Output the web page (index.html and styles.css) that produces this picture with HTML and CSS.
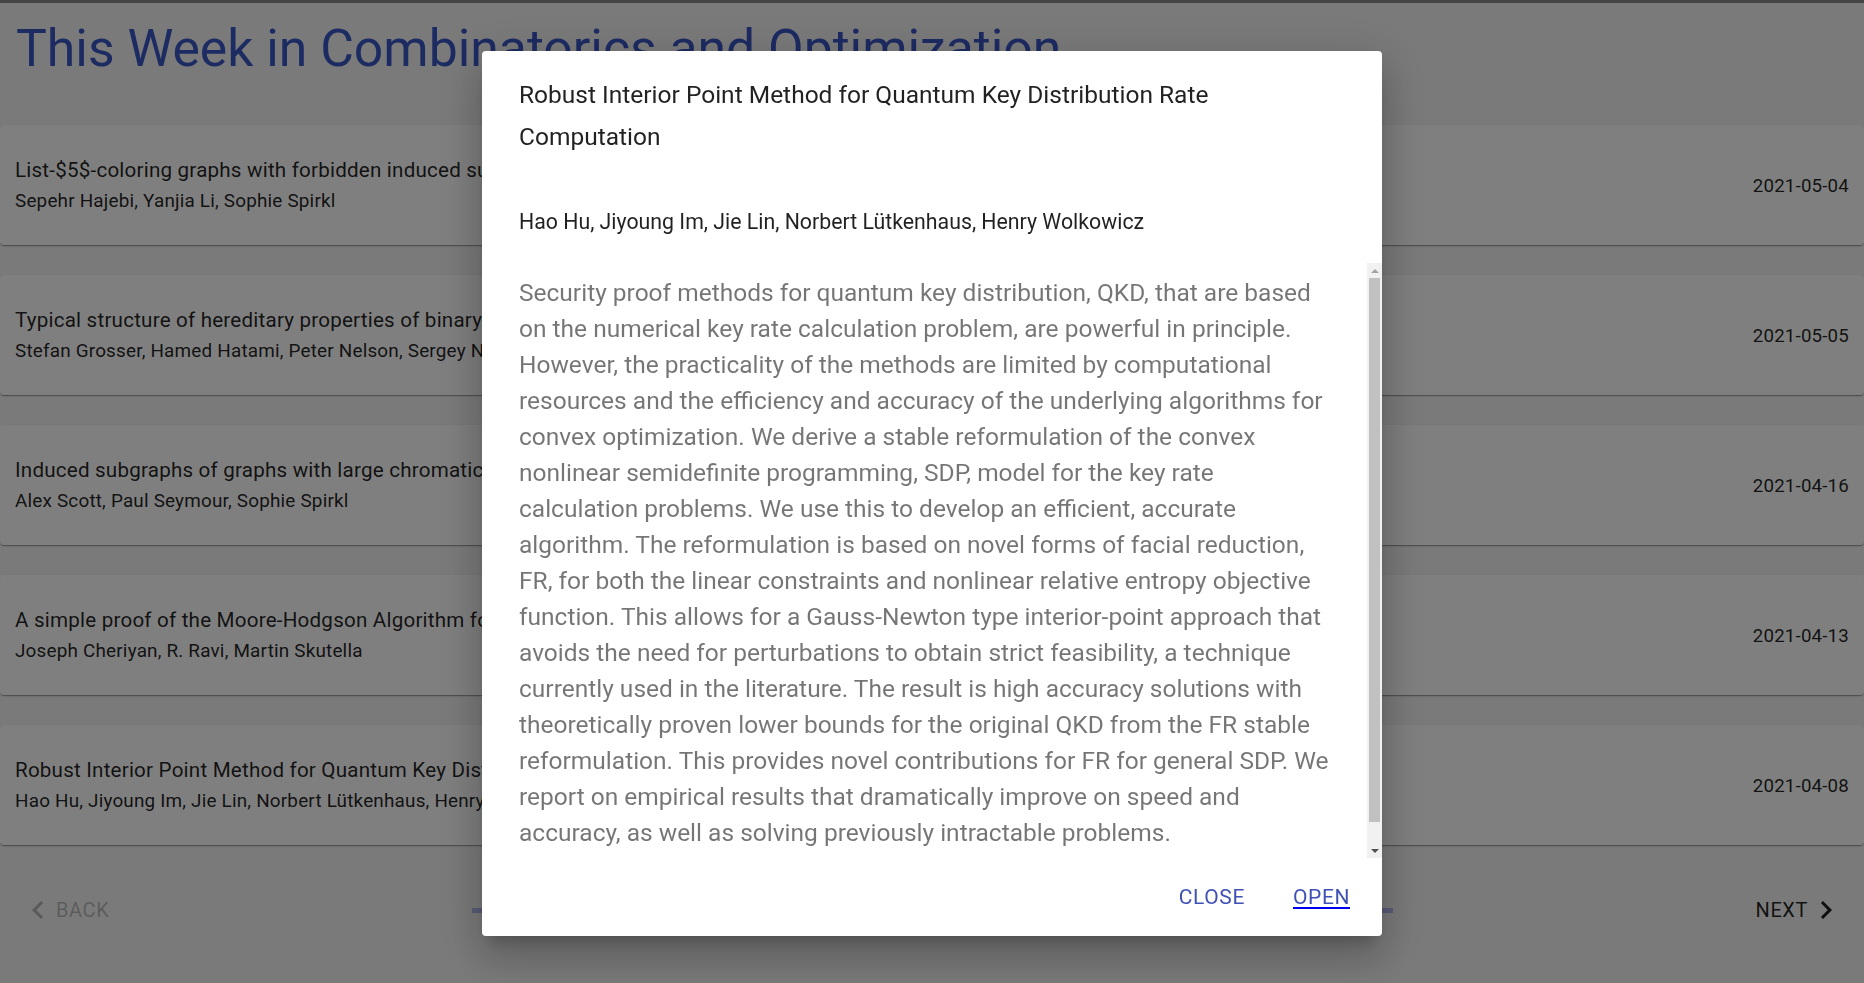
FILE: index.html
```html
<!DOCTYPE html>
<html lang="en">
<head>
<meta charset="utf-8">
<title>This Week in Combinatorics and Optimization</title>
<link rel="stylesheet" href="styles.css">
</head>
<body>
<div class="topbar"></div>
<main class="page">
  <h1 class="page-title">This Week in Combinatorics and Optimization</h1>
  <ul class="paper-list">
    <li class="paper-card">
      <div class="paper-text">
        <div class="paper-title">List-$5$-coloring graphs with forbidden induced subgraphs</div>
        <div class="paper-authors">Sepehr Hajebi, Yanjia Li, Sophie Spirkl</div>
      </div>
      <div class="paper-date">2021-05-04</div>
    </li>
    <li class="paper-card">
      <div class="paper-text">
        <div class="paper-title">Typical structure of hereditary properties of binary matroids</div>
        <div class="paper-authors">Stefan Grosser, Hamed Hatami, Peter Nelson, Sergey Norin</div>
      </div>
      <div class="paper-date">2021-05-05</div>
    </li>
    <li class="paper-card">
      <div class="paper-text">
        <div class="paper-title">Induced subgraphs of graphs with large chromatic number. XIV. Excluding a biclique and an induced tree</div>
        <div class="paper-authors">Alex Scott, Paul Seymour, Sophie Spirkl</div>
      </div>
      <div class="paper-date">2021-04-16</div>
    </li>
    <li class="paper-card">
      <div class="paper-text">
        <div class="paper-title">A simple proof of the Moore-Hodgson Algorithm for minimizing the number of late jobs</div>
        <div class="paper-authors">Joseph Cheriyan, R. Ravi, Martin Skutella</div>
      </div>
      <div class="paper-date">2021-04-13</div>
    </li>
    <li class="paper-card">
      <div class="paper-text">
        <div class="paper-title">Robust Interior Point Method for Quantum Key Distribution Rate Computation</div>
        <div class="paper-authors">Hao Hu, Jiyoung Im, Jie Lin, Norbert Lütkenhaus, Henry Wolkowicz</div>
      </div>
      <div class="paper-date">2021-04-08</div>
    </li>
  </ul>
  <nav class="stepper">
    <button class="step-btn step-back" disabled>
      <svg class="chev" viewBox="0 0 24 24"><path d="M15.41 16.59L10.83 12l4.58-4.59L14 6l-6 6 6 6 1.41-1.41z"/></svg>
      <span>Back</span>
    </button>
    <div class="progress"><div class="progress-fill"></div></div>
    <button class="step-btn step-next">
      <span>Next</span>
      <svg class="chev" viewBox="0 0 24 24"><path d="M8.59 16.59L13.17 12 8.59 7.41 10 6l6 6-6 6-1.41-1.41z"/></svg>
    </button>
  </nav>
</main>

<div class="modal">
  <div class="backdrop"></div>
  <div class="dialog" role="dialog">
    <div class="dialog-header">
      <h2 class="dialog-title">Robust Interior Point Method for Quantum Key Distribution Rate Computation</h2>
      <p class="dialog-authors">Hao Hu, Jiyoung Im, Jie Lin, Norbert Lütkenhaus, Henry Wolkowicz</p>
    </div>
    <div class="abstract-wrap">
      <div class="dialog-abstract">
        <p>Security proof methods for quantum key distribution, QKD, that are based on the numerical key rate calculation problem, are powerful in principle. However, the practicality of the methods are limited by computational resources and the efficiency and accuracy of the underlying algorithms for convex optimization. We derive a stable reformulation of the convex nonlinear semidefinite programming, SDP, model for the key rate calculation problems. We use this to develop an efficient, accurate algorithm. The reformulation is based on novel forms of facial reduction, FR, for both the linear constraints and nonlinear relative entropy objective function. This allows for a Gauss-Newton type interior-point approach that avoids the need for perturbations to obtain strict feasibility, a technique currently used in the literature. The result is high accuracy solutions with theoretically proven lower bounds for the original QKD from the FR stable reformulation. This provides novel contributions for FR for general SDP. We report on empirical results that dramatically improve on speed and accuracy, as well as solving previously intractable problems.</p>
      </div>
      <div class="scrollbar" aria-hidden="true">
        <span class="sb-arrow sb-up"></span>
        <span class="sb-thumb"></span>
        <span class="sb-arrow sb-down"></span>
      </div>
    </div>
    <div class="dialog-actions">
      <button class="text-btn">Close</button>
      <a class="text-btn link-btn" href="#"><span>Open</span></a>
    </div>
  </div>
</div>
</body>
</html>
```
FILE: styles.css
```css
* { box-sizing: border-box; }

html, body {
  margin: 0;
  padding: 0;
  height: 100%;
}

body {
  background: #f5f5f5;
  font-family: Roboto, "Liberation Sans", Arial, sans-serif;
  color: rgba(0, 0, 0, 0.87);
  overflow: hidden;
}

.topbar {
  height: 3px;
  background: #888888;
}

.page {
  display: flex;
  flex-direction: column;
}

.page-title {
  margin: 13px 0 43px;
  padding-left: 16px;
  font-size: 51.7px;
  line-height: 66px;
  font-weight: 400;
  color: #3a56c6;
  white-space: nowrap;
}

.paper-list {
  list-style: none;
  margin: 0;
  padding: 0;
  display: flex;
  flex-direction: column;
  gap: 30px;
}

.paper-card {
  height: 120px;
  display: flex;
  align-items: center;
  justify-content: space-between;
  padding: 2px 15px 0;
  background: #ffffff;
  border-radius: 4px;
  box-shadow: 0 2px 1px -1px rgba(0,0,0,0.2), 0 1px 1px 0 rgba(0,0,0,0.14), 0 1px 3px 0 rgba(0,0,0,0.12);
}

.paper-title {
  font-size: 20.6px;
  line-height: 30px;
  letter-spacing: 0.01em;
}

.paper-authors {
  font-size: 18.9px;
  line-height: 32px;
  letter-spacing: 0.01em;
}

.paper-date {
  font-size: 18.7px;
  letter-spacing: 0.01em;
}

.stepper {
  height: 50px;
  margin-top: 40px;
  padding: 0 20px;
  display: flex;
  align-items: center;
  justify-content: space-between;
}

.step-btn {
  display: flex;
  align-items: center;
  border: 0;
  background: none;
  padding: 0;
  font-family: inherit;
  font-size: 20px;
  letter-spacing: 0.02857em;
  text-transform: uppercase;
  color: rgba(0, 0, 0, 0.87);
}

.step-btn:disabled {
  color: rgba(0, 0, 0, 0.26);
}

.chev {
  width: 36px;
  height: 36px;
  fill: currentColor;
}

.progress {
  width: 921px;
  height: 5px;
  background: #b3bbf0;
}

.progress-fill {
  width: 0;
  height: 100%;
  background: #3f51b5;
}

/* Modal */
.modal {
  position: fixed;
  inset: 0;
  display: flex;
  justify-content: center;
  align-items: flex-start;
  padding-top: 51px;
}

.backdrop {
  position: absolute;
  inset: 0;
  background: rgba(0, 0, 0, 0.5);
}

.dialog {
  position: relative;
  width: 900px;
  height: 885px;
  background: #ffffff;
  border-radius: 4px;
  display: flex;
  flex-direction: column;
  box-shadow: 0 11px 15px -7px rgba(0,0,0,0.2), 0 24px 38px 3px rgba(0,0,0,0.14), 0 9px 46px 8px rgba(0,0,0,0.12);
}

.dialog-header {
  padding: 23px 37px 0;
}

.dialog-title {
  margin: 0;
  font-size: 24.5px;
  line-height: 42px;
  font-weight: 400;
  color: rgba(0, 0, 0, 0.87);
}

.dialog-authors {
  margin: 50px 0 0;
  font-size: 21.3px;
  line-height: 28px;
  color: rgba(0, 0, 0, 0.87);
}

.abstract-wrap {
  position: relative;
  margin-top: 27px;
  height: 595px;
}

.dialog-abstract {
  height: 100%;
  overflow: hidden;
  padding: 11.5px 46px 0 37px;
}

.dialog-abstract p {
  margin: 0;
  font-size: 24.5px;
  line-height: 36px;
  color: rgba(0, 0, 0, 0.54);
}

.scrollbar {
  position: absolute;
  top: 0;
  right: 0;
  bottom: 0;
  width: 15px;
  background: #f1f1f1;
  display: flex;
  flex-direction: column;
}

.sb-arrow {
  height: 15px;
  flex: 0 0 15px;
  display: flex;
  align-items: center;
  justify-content: center;
}

.sb-up::before {
  content: "";
  border-left: 4px solid transparent;
  border-right: 4px solid transparent;
  border-bottom: 4px solid #a3a3a3;
}

.sb-down {
  margin-top: auto;
}

.sb-down::before {
  content: "";
  border-left: 4px solid transparent;
  border-right: 4px solid transparent;
  border-top: 4px solid #505050;
}

.sb-thumb {
  flex: 0 0 544px;
  margin: 0 2px;
  background: #c1c1c1;
}

.dialog-actions {
  flex: 1;
  display: flex;
  align-items: center;
  justify-content: flex-end;
  gap: 48px;
  padding-right: 32px;
}

.text-btn {
  border: 0;
  background: none;
  padding: 0;
  font-family: inherit;
  font-size: 21px;
  letter-spacing: 0.02857em;
  text-transform: uppercase;
  color: #3f51b5;
}

.link-btn {
  color: #0000ee;
  text-decoration: underline;
  text-decoration-thickness: 2px;
  text-underline-offset: 3px;
}

.link-btn span {
  color: #3f51b5;
}
```
